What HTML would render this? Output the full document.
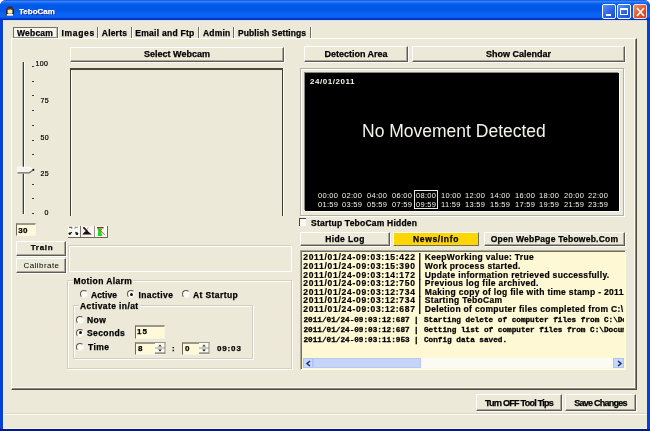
<!DOCTYPE html>
<html><head><meta charset="utf-8">
<style>
*{margin:0;padding:0;box-sizing:border-box}
html,body{width:650px;height:431px;overflow:hidden;background:#fff}
body{position:relative;will-change:transform;font-family:"Liberation Sans",sans-serif;color:#000}
.a{position:absolute}
#win{left:0;top:0;width:650px;height:431px;background:#0a3ed8;border-radius:6px 6px 0 0}
#title{left:0;top:0;width:650px;height:20px;border-radius:6px 6px 0 0;
 background:linear-gradient(#0831d9 0px,#3d8cff 1px,#2a7cf8 2px,#1268f0 3px,#0058e8 5px,#0058e8 11px,#0a62f4 13px,#0a62f4 17px,#0850e0 18px,#0030b8 19px,#0030b8 20px)}
#client{left:3px;top:20px;width:644px;height:409px;background:#ece9d8;border-left:1px solid #e8f0ff;border-top:1px solid #d8dcf0;border-bottom:1px solid #f0f4ff}
#bot{left:0;top:429px;width:650px;height:2px;background:#001890}
.t{white-space:nowrap;font-weight:bold;font-size:8px;line-height:10px;-webkit-text-stroke:0.25px currentColor}
.btn{background:#ece9d8;border-top:1px solid #fff;border-left:1px solid #fff;border-right:1px solid #5e5c52;border-bottom:1px solid #5e5c52;box-shadow:inset -1px -1px 0 #aca899,1px 1px 0 #fff}
.sunk{border-top:1px solid #aca899;border-left:1px solid #aca899;border-right:1px solid #fff;border-bottom:1px solid #fff}
.sunk2{border-top:1px solid #716f64;border-left:1px solid #716f64;border-right:1px solid #f1efe2;border-bottom:1px solid #f1efe2}
.ctr{display:flex;align-items:center;justify-content:center}
.grp{border:1px solid #d0d0bf;box-shadow:1px 1px 0 #fff inset, 1px 1px 0 #fff}
.glab{background:#ece9d8;padding:0 1px}
.tick{width:2px;height:1px;background:#3a3a3a}
.lab{font-size:7px;line-height:7px;color:#000;white-space:nowrap;letter-spacing:0.4px;-webkit-text-stroke:0.2px #000}
.tm{font-size:7.5px;line-height:8px;letter-spacing:0.3px;color:#f4f4e8;white-space:nowrap;font-family:"Liberation Sans",sans-serif}
.log{font-size:8px;line-height:8.6px;font-weight:bold;white-space:nowrap}
.radio{width:8px;height:8px;border-radius:50%;background:#fbfbf6;border:1px solid #5a584e;border-right-color:#f4f2ea;border-bottom-color:#f4f2ea}
.dot{width:3px;height:3px;background:#111;border-radius:50%;left:1.5px;top:1.5px}
.yin{background:#fff9d8;border-top:2px solid #9a988a;border-left:1px solid #6a685c;border-right:1px solid #f6f4ea;border-bottom:1px solid #f6f4ea}
.lt,.lp,.lm{font-size:8.5px;line-height:9px;font-weight:bold;white-space:nowrap;-webkit-text-stroke:0.2px #000}
.lt{left:1.2px;letter-spacing:0.72px}.lp{left:116.5px}.lm{left:122.8px;letter-spacing:0.32px}
.mt,.mp,.mm{font-family:"Liberation Mono",monospace;font-size:7.7px;line-height:9px;font-weight:bold;white-space:nowrap;-webkit-text-stroke:0.3px #000}
.mt{left:1.5px}.mp{left:112px}.mm{left:122px}
.spin{width:10px;height:10px;background:#f8f6ec;border-right:1px solid #8a887a}
.spin:before{content:"";position:absolute;left:0;top:4px;width:10px;height:1px;background:#8a887a}
.spin:after{content:"";position:absolute;left:0;top:9px;width:10px;height:1px;background:#8a887a}
</style></head><body>
<div id="win" class="a"></div>
<div id="title" class="a"></div>
<!-- icon -->
<svg class="a" style="left:5px;top:5px" width="10" height="12">
 <path d="M1 11 V7 Q1 1.5 5 1.5 Q9 1.5 9 7 V11 Z" fill="#202028"/>
 <path d="M2 5.5 Q2 2.3 5 2.3 Q8 2.3 8 5.5 Z" fill="#6a3410"/>
 <path d="M2.6 5 Q5 3.8 7.4 5 V8 Q5 9 2.6 8 Z" fill="#f6eeb4"/>
 <path d="M1.7 10.8 V9.4 Q3.3 8 5 8.8 Q6.7 8 8.3 9.4 V10.8 Z" fill="#f8f8ff"/>
</svg>
<div class="a t" style="left:19px;top:7px;font-size:8px;line-height:9px;color:#fff;letter-spacing:0px;text-shadow:1px 1px 0 #0a2a90">TeboCam</div>
<!-- title buttons -->
<div class="a" style="left:602px;top:4px;width:14px;height:15px;border:1px solid #fff;border-radius:2px;background:linear-gradient(135deg,#5a90f8,#2860e8 60%,#1a50d8)"><div class="a" style="left:3px;top:9px;width:5px;height:2px;background:#fff"></div></div>
<div class="a" style="left:617px;top:4px;width:14px;height:15px;border:1px solid #fff;border-radius:2px;background:linear-gradient(135deg,#5a90f8,#2860e8 60%,#1a50d8)"><div class="a" style="left:2px;top:3px;width:8px;height:7px;border:1px solid #fff;border-top-width:2px"></div></div>
<div class="a" style="left:633px;top:4px;width:14px;height:15px;border:1px solid #f4e0e0;border-radius:2px;background:linear-gradient(135deg,#f4906a,#e05428 55%,#d04018)">
 <svg class="a" style="left:2px;top:2px" width="9" height="10"><path d="M1 1 L8 9 M8 1 L1 9" stroke="#fff" stroke-width="1.6"/></svg></div>
<div id="client" class="a"></div>
<div id="bot" class="a"></div>

<!-- tab strip -->
<div class="a sunk2" style="left:13px;top:27px;width:44px;height:11px;background:#f6f5ee;border-right-color:#c0beb0;border-bottom-color:#8a8878"></div>
<div class="a t" style="left:17px;top:27.5px;font-size:8.5px;letter-spacing:0.20px">Webcam</div>
<div class="a" style="left:57px;top:27px;width:2px;height:11px;background:#6e6c60;border-right:1px solid #fff"></div>
<div class="a t" style="left:61.5px;top:27.5px;font-size:8.5px;letter-spacing:0.68px">Images</div>
<div class="a" style="left:97px;top:27px;width:2px;height:11px;background:#6e6c60;border-right:1px solid #fff"></div>
<div class="a t" style="left:101.8px;top:27.5px;font-size:8.5px;letter-spacing:0.20px">Alerts</div>
<div class="a" style="left:131px;top:27px;width:2px;height:11px;background:#6e6c60;border-right:1px solid #fff"></div>
<div class="a t" style="left:135.3px;top:27.5px;font-size:8.5px;letter-spacing:0.27px">Email and Ftp</div>
<div class="a" style="left:198px;top:27px;width:2px;height:11px;background:#6e6c60;border-right:1px solid #fff"></div>
<div class="a t" style="left:203px;top:27.5px;font-size:8.5px;letter-spacing:0.20px">Admin</div>
<div class="a" style="left:233px;top:27px;width:2px;height:11px;background:#6e6c60;border-right:1px solid #fff"></div>
<div class="a t" style="left:238px;top:27.5px;font-size:8.5px;letter-spacing:0.10px">Publish Settings</div>
<div class="a" style="left:310px;top:27px;width:2px;height:11px;background:#6e6c60;border-right:1px solid #fff"></div>

<!-- tab page -->
<div class="a" style="left:11px;top:38px;width:626px;height:352px;border-left:1px solid #fff;border-top:1px solid #fff;border-right:1px solid #4e4c44;border-bottom:1px solid #4e4c44;box-shadow:inset -1px -1px 0 #8a887a,inset -2px -2px 0 #fafaf4"></div>

<!-- slider -->
<div class="a" style="left:22px;top:62px;width:2px;height:152px;background:#3e3c34;border-left:1px solid #b8b6a8;box-shadow:1px 0 0 #fff"></div>
<div class="a tick" style="left:32px;top:66px"></div><div class="a tick" style="left:32px;top:81px"></div><div class="a tick" style="left:32px;top:95px"></div><div class="a tick" style="left:32px;top:110px"></div><div class="a tick" style="left:32px;top:125px"></div><div class="a tick" style="left:32px;top:140px"></div><div class="a tick" style="left:32px;top:154px"></div><div class="a tick" style="left:32px;top:170px"></div><div class="a tick" style="left:32px;top:184px"></div><div class="a tick" style="left:32px;top:198px"></div><div class="a tick" style="left:32px;top:212.5px"></div>
<div class="a lab" style="left:35.5px;top:60px">100</div>
<div class="a lab" style="left:40.5px;top:96.5px">75</div>
<div class="a lab" style="left:40.5px;top:133.5px">50</div>
<div class="a lab" style="left:40.5px;top:170px">25</div>
<div class="a lab" style="left:44.5px;top:208.5px">0</div>
<svg class="a" style="left:16px;top:166px" width="20" height="9"><path d="M1.5 1.2 H13 L17.8 3.8 L13.5 7 H1.5 Z" fill="#f6f4ec" stroke="#fdfdf8" stroke-width="1"/><path d="M1.5 6.8 H13.2 L17.6 3.8" stroke="#6a685c" stroke-width="1.2" fill="none"/><circle cx="17.4" cy="3.8" r="1" fill="#111"/></svg>

<div class="a yin" style="left:16px;top:223px;width:20px;height:13px"></div>
<div class="a t" style="left:18.3px;top:226px;font-size:8px;line-height:9px;letter-spacing:0.2px">30</div>

<div class="a btn ctr t" style="left:16px;top:241px;width:50px;height:15px;font-size:8px;letter-spacing:0.7px;padding-left:2px;padding-bottom:1px">Train</div>
<div class="a btn ctr" style="left:16px;top:258px;width:50px;height:15px;font-size:8px;letter-spacing:0.45px;white-space:nowrap;padding-left:1px;padding-bottom:1px">Calibrate</div>

<!-- select webcam -->
<div class="a btn ctr t" style="left:70px;top:47px;width:214px;height:15px;font-size:9px;padding-bottom:2px">Select Webcam</div>
<div class="a" style="left:70px;top:68px;width:213px;height:148px;border-top:2px solid #4a483e;border-left:1px solid #3e3c34;border-right:1px solid #3e3c34;box-shadow:inset 1px 0 0 #fff,1px 0 0 #fff"></div>

<!-- icons -->
<svg class="a" style="left:66px;top:224px" width="44" height="16">
 <rect x="2" y="2" width="40" height="11" fill="#f8f8f2"/>
 <rect x="15" y="2" width="13" height="11" fill="#faf2f0"/>
 <rect x="2" y="13" width="40" height="1" fill="#6a685c"/>
 <rect x="14" y="2" width="1" height="11" fill="#7a786c"/>
 <rect x="28" y="2" width="1" height="11" fill="#9a988c"/>
 <rect x="41" y="2" width="1" height="11" fill="#6a685c"/>
 <path d="M3 3.3 H5.8 V4.6" stroke="#333" stroke-width="0.9" fill="none"/>
 <path d="M11.8 3.3 H9 V4.6" stroke="#777" stroke-width="0.9" fill="none"/>
 <path d="M3 10.3 L5.8 8.2" stroke="#111" stroke-width="1.2"/><circle cx="3.8" cy="9.6" r="1.2" fill="#111"/>
 <path d="M12 10.3 L9.5 8.2" stroke="#111" stroke-width="1.2"/><circle cx="10.9" cy="9.8" r="1.3" fill="#111"/>
 <path d="M22.5 3 L17.5 10.5 M17 3 L24 10.5" stroke="#e4a8a8" stroke-width="1"/>
 <path d="M17.4 3.4 L21.5 7.5" stroke="#111" stroke-width="1.6"/>
 <path d="M16.3 10.6 L19 7.5 L21.5 7 L25.8 10.6 Z" fill="#111"/>
 <rect x="31" y="3" width="6.6" height="1.4" fill="#8a3a18"/>
 <path d="M31.4 4.4 H36.4 L35.2 7.2 L36.2 12 H31.6 L32.2 7.2 Z" fill="#22d822"/>
 <path d="M32 4 L39 11.2" stroke="#c84a3a" stroke-width="0.9"/>
</svg>
<!-- panel -->
<div class="a" style="left:68px;top:245px;width:224px;height:27px;border:1px solid #d0cfc0;border-right-color:#fff;border-bottom-color:#fff;box-shadow:inset 1px 1px 0 #fff"></div>

<!-- motion alarm group -->
<div class="a" style="left:67px;top:280px;width:225px;height:89px;border:1px solid #d0d0bf;box-shadow:inset 1px 1px 0 #fff,1px 1px 0 #fff"></div>
<div class="a t glab" style="left:72.5px;top:276.3px;font-size:8.5px;letter-spacing:0.4px">Motion Alarm</div>
<div class="a radio" style="left:80px;top:290px"></div>
<div class="a t" style="left:91px;top:290px;font-size:8.5px;letter-spacing:0.1px">Active</div>
<div class="a radio" style="left:127px;top:290px"><div class="a dot"></div></div>
<div class="a t" style="left:138.5px;top:290px;font-size:8.5px;letter-spacing:0.4px">Inactive</div>
<div class="a radio" style="left:182px;top:290px"></div>
<div class="a t" style="left:193px;top:290px;font-size:8.5px;letter-spacing:0.4px">At Startup</div>

<div class="a" style="left:73px;top:305px;width:180px;height:54px;border:1px solid #d0d0bf;box-shadow:inset 1px 1px 0 #fff,1px 1px 0 #fff"></div>
<div class="a t glab" style="left:79px;top:300.5px;font-size:8.5px;letter-spacing:0.4px">Activate in/at</div>
<div class="a radio" style="left:76px;top:315.5px"></div>
<div class="a t" style="left:87px;top:314.5px;font-size:8.5px;letter-spacing:0.4px">Now</div>
<div class="a radio" style="left:76px;top:328.5px"><div class="a dot"></div></div>
<div class="a t" style="left:87px;top:327.5px;font-size:8.5px;letter-spacing:0.4px">Seconds</div>
<div class="a yin" style="left:135px;top:325px;width:30px;height:14px"></div>
<div class="a t" style="left:137px;top:327px;font-size:8px;letter-spacing:1px">15</div>
<div class="a radio" style="left:76px;top:343px"></div>
<div class="a t" style="left:88px;top:342px;font-size:8.5px;letter-spacing:0.4px">Time</div>
<div class="a yin" style="left:135px;top:342px;width:31px;height:13px"></div>
<svg class="a" style="left:155px;top:343px" width="11" height="12"><rect x="0" y="0" width="10" height="11" fill="#fbfaf0"/><rect x="0" y="4.5" width="10" height="1" fill="#9a988a"/><rect x="0" y="9.5" width="10" height="1.2" fill="#6a685c"/><rect x="9.5" y="0" width="1" height="11" fill="#8a887a"/><path d="M3.2 3.6 H6.8 L5 1.6 Z" fill="#333"/><path d="M3.2 6.4 H6.8 L5 8.4 Z" fill="#111"/></svg>
<div class="a t" style="left:138px;top:344px;font-size:8px">8</div>
<div class="a t" style="left:172px;top:344px;font-size:8px">:</div>
<div class="a yin" style="left:182px;top:342px;width:28px;height:13px"></div>
<svg class="a" style="left:199px;top:343px" width="11" height="12"><rect x="0" y="0" width="10" height="11" fill="#fbfaf0"/><rect x="0" y="4.5" width="10" height="1" fill="#9a988a"/><rect x="0" y="9.5" width="10" height="1.2" fill="#6a685c"/><rect x="9.5" y="0" width="1" height="11" fill="#8a887a"/><path d="M3.2 3.6 H6.8 L5 1.6 Z" fill="#333"/><path d="M3.2 6.4 H6.8 L5 8.4 Z" fill="#111"/></svg>
<div class="a t" style="left:185px;top:344px;font-size:8px">0</div>
<div class="a t" style="left:217px;top:344px;font-size:8px;letter-spacing:0.85px">09:03</div>

<!-- right side -->
<div class="a btn ctr t" style="left:304px;top:46px;width:104px;height:16px;font-size:9px;padding-bottom:1px">Detection Area</div>
<div class="a btn ctr t" style="left:412px;top:46px;width:213px;height:16px;font-size:9px;padding-bottom:1px">Show Calendar</div>
<div class="a" style="left:300px;top:68px;width:324px;height:148px;border:1px solid #b4b2a2;box-shadow:inset 1px 1px 0 #fff,1px 1px 0 #fff"></div>
<div class="a" style="left:305px;top:73px;width:314px;height:138px;background:#000;box-shadow:1px 1px 0 #fff,-1px -1px 0 #8a887a"></div>
<div class="a" style="left:310px;top:77px;font-weight:bold;font-size:8px;line-height:9px;color:#f4f4e8;letter-spacing:0.55px">24/01/2011</div>
<div class="a" style="left:362px;top:120.5px;font-size:17.5px;line-height:20px;color:#f4f4e8;white-space:nowrap">No Movement Detected</div>
<div class="a tm" style="left:318px;top:191.5px">00:00</div><div class="a tm" style="left:318px;top:200.5px">01:59</div>
<div class="a tm" style="left:342px;top:191.5px">02:00</div><div class="a tm" style="left:342px;top:200.5px">03:59</div>
<div class="a tm" style="left:367px;top:191.5px">04:00</div><div class="a tm" style="left:367px;top:200.5px">05:59</div>
<div class="a tm" style="left:392px;top:191.5px">06:00</div><div class="a tm" style="left:392px;top:200.5px">07:59</div>
<div class="a tm" style="left:416px;top:191.5px">08:00</div><div class="a tm" style="left:416px;top:200.5px">09:59</div>
<div class="a tm" style="left:441px;top:191.5px">10:00</div><div class="a tm" style="left:441px;top:200.5px">11:59</div>
<div class="a tm" style="left:465px;top:191.5px">12:00</div><div class="a tm" style="left:465px;top:200.5px">13:59</div>
<div class="a tm" style="left:490px;top:191.5px">14:00</div><div class="a tm" style="left:490px;top:200.5px">15:59</div>
<div class="a tm" style="left:515px;top:191.5px">16:00</div><div class="a tm" style="left:515px;top:200.5px">17:59</div>
<div class="a tm" style="left:539px;top:191.5px">18:00</div><div class="a tm" style="left:539px;top:200.5px">19:59</div>
<div class="a tm" style="left:564px;top:191.5px">20:00</div><div class="a tm" style="left:564px;top:200.5px">21:59</div>
<div class="a tm" style="left:588px;top:191.5px">22:00</div><div class="a tm" style="left:588px;top:200.5px">23:59</div>

<div class="a" style="left:414px;top:190px;width:24px;height:19px;border:1px solid #e8e8d8"></div>

<div class="a" style="left:299px;top:218px;width:7px;height:8px;background:#fafaf6;border:1px solid #4a483e;border-right:none;border-bottom:none"></div>
<div class="a t" style="left:311px;top:218px;font-size:8.5px;letter-spacing:0.22px">Startup TeboCam Hidden</div>

<div class="a btn ctr t" style="left:300px;top:232px;width:90px;height:14px;font-size:8.5px;letter-spacing:0.4px">Hide Log</div>
<div class="a ctr t" style="left:393px;top:232px;width:86px;height:14px;font-size:8.5px;letter-spacing:0.65px;background:#ffd600;border-top:1px solid #fff;border-left:1px solid #fff;border-right:1px solid #716f64;border-bottom:1px solid #716f64">News/Info</div>
<div class="a btn ctr t" style="left:484px;top:232px;width:141px;height:14px;font-size:8.5px;letter-spacing:0.23px">Open WebPage Teboweb.Com</div>

<div class="a" style="left:300px;top:250px;width:326px;height:120px;background:#fff8d4;border:1px solid #aca899;border-right-color:#fff;border-bottom-color:#fff;overflow:hidden">
 <div class="a" style="left:0;top:0;width:324px;height:118px;border-top:1px solid #716f64;border-left:1px solid #716f64"></div>
</div>
<div class="a" style="left:302px;top:251px;width:322px;height:107px;overflow:hidden">
 <div class="a lt" style="top:2.3px">2011/01/24-09:03:15:422</div><div class="a lp" style="top:2.3px">|</div><div class="a lm" style="top:2.3px">KeepWorking value: True</div>
 <div class="a lt" style="top:10.9px">2011/01/24-09:03:15:390</div><div class="a lp" style="top:10.9px">|</div><div class="a lm" style="top:10.9px">Work process started.</div>
 <div class="a lt" style="top:19.5px">2011/01/24-09:03:14:172</div><div class="a lp" style="top:19.5px">|</div><div class="a lm" style="top:19.5px">Update information retrieved successfully.</div>
 <div class="a lt" style="top:28.1px">2011/01/24-09:03:12:750</div><div class="a lp" style="top:28.1px">|</div><div class="a lm" style="top:28.1px">Previous log file archived.</div>
 <div class="a lt" style="top:36.7px">2011/01/24-09:03:12:734</div><div class="a lp" style="top:36.7px">|</div><div class="a lm" style="top:36.7px">Making copy of log file with time stamp - 2011/01/24</div>
 <div class="a lt" style="top:45.3px">2011/01/24-09:03:12:734</div><div class="a lp" style="top:45.3px">|</div><div class="a lm" style="top:45.3px">Starting TeboCam</div>
 <div class="a lt" style="top:53.9px">2011/01/24-09:03:12:687</div><div class="a lp" style="top:53.9px">|</div><div class="a lm" style="top:53.9px">Deletion of computer files completed from C:\Documents and Settings</div>
 <div class="a mt" style="top:64.5px">2011/01/24-09:03:12:687</div><div class="a mp" style="top:64.5px">|</div><div class="a mm" style="top:64.5px">Starting delete of computer files from C:\Documents and Settings</div>
 <div class="a mt" style="top:74.5px">2011/01/24-09:03:12:687</div><div class="a mp" style="top:74.5px">|</div><div class="a mm" style="top:74.5px">Getting list of computer files from C:\Documents and Settings</div>
 <div class="a mt" style="top:84.5px">2011/01/24-09:03:11:953</div><div class="a mp" style="top:84.5px">|</div><div class="a mm" style="top:84.5px">Config data saved.</div>
</div>
<!-- scrollbar -->
<div class="a" style="left:303px;top:358px;width:321px;height:10px;background:#fbfbf4"></div>
<div class="a" style="left:303px;top:358px;width:10px;height:10px;background:#c8d8fa;border:1px solid #b0c4f0"><svg class="a" style="left:1px;top:1px" width="7" height="7"><path d="M5 1 L2 3.5 L5 6" stroke="#1a2a80" stroke-width="1.5" fill="none"/></svg></div>
<div class="a" style="left:313px;top:358px;width:108px;height:10px;background:#c6d4f8;border:1px solid #b8c8f4"></div>
<div class="a" style="left:613px;top:358px;width:11px;height:10px;background:#c8d8fa;border:1px solid #b0c4f0"><svg class="a" style="left:2px;top:1px" width="7" height="7"><path d="M2 1 L5 3.5 L2 6" stroke="#1a2a80" stroke-width="1.5" fill="none"/></svg></div>

<!-- bottom buttons -->
<div class="a btn ctr t" style="left:476px;top:394px;width:86px;height:17px;font-size:9px;letter-spacing:-0.75px">Turn OFF Tool Tips</div>
<div class="a btn ctr t" style="left:565px;top:394px;width:71px;height:17px;font-size:9px;letter-spacing:-0.75px">Save Changes</div>
<div class="a" style="left:4px;top:413px;width:643px;height:1px;background:#dcd8c4"></div>
<div class="a" style="left:4px;top:414px;width:643px;height:1px;background:#fffdf4"></div>

</body></html>
